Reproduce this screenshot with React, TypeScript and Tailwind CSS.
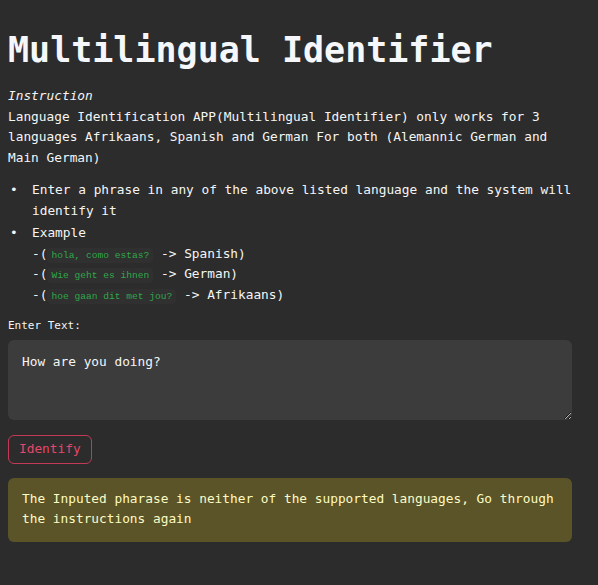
import React from 'react';

const examples = [
  { phrase: 'hola, como estas?', lang: 'Spanish' },
  { phrase: 'Wie geht es ihnen', lang: 'German' },
  { phrase: 'hoe gaan dit met jou?', lang: 'Afrikaans' },
];

const mono = '"DejaVu Sans Mono", "Liberation Mono", monospace';

const Code: React.FC<{ children: React.ReactNode }> = ({ children }) => (
  <code className="bg-[#303030] text-[#2fa84a] text-[9.6px] leading-none px-[4px] py-[2px] rounded-sm">
    {children}
  </code>
);

const Bullet: React.FC<{ children: React.ReactNode }> = ({ children }) => (
  <li className="flex">
    <span className="w-[24px] shrink-0 pl-[2px]">•</span>
    <div className="flex-1">{children}</div>
  </li>
);

export default function App() {
  return (
    <div
      className="min-h-[585px] bg-[#2c2c2c] text-[#f5f5f5] pl-2 pr-[26px] pt-[28px] pb-8 text-[12.8px] leading-[20.5px]"
      style={{ fontFamily: mono }}
    >
      <h1 className="text-[35px] leading-[44px] font-bold text-[#f5f7fa]">
        Multilingual Identifier
      </h1>

      <div className="mt-[14px]">
        <p className="italic">Instruction</p>
        <p>
          Language Identification APP(Multilingual Identifier) only works for 3
          languages Afrikaans, Spanish and German For both (Alemannic German and
          Main German)
        </p>
      </div>

      <ul className="mt-[12px] flex flex-col gap-[2px]">
        <Bullet>
          Enter a phrase in any of the above listed language and the system will
          identify it
        </Bullet>
        <Bullet>
          Example
          {examples.map((ex) => (
            <div key={ex.lang} className="h-[20.5px]">
              -(<Code>{ex.phrase}</Code> -&gt; {ex.lang})
            </div>
          ))}
        </Bullet>
      </ul>

      <label className="block mt-[13px] text-[11px] leading-[16px]">Enter Text:</label>
      <textarea
        className="mt-[6px] block w-full h-[80px] bg-[#3c3c3c] rounded-md px-[14px] py-[12px] text-[12.8px] leading-[20px] text-[#f5f5f5] outline-none resize-y"
        defaultValue="How are you doing?"
        style={{ fontFamily: mono }}
      />

      <button
        className="mt-[15px] h-[29px] px-[10px] rounded-md border border-[#c23a57] text-[#e4476a] text-[12.8px]"
        style={{ fontFamily: mono }}
      >
        Identify
      </button>

      <div className="mt-[14px] bg-[#5b5429] rounded-md px-[14px] pt-[11px] pb-[13px] leading-[20px] text-[#fdfbc4]">
        The Inputed pharase is neither of the supported languages, Go through
        the instructions again
      </div>
    </div>
  );
}
